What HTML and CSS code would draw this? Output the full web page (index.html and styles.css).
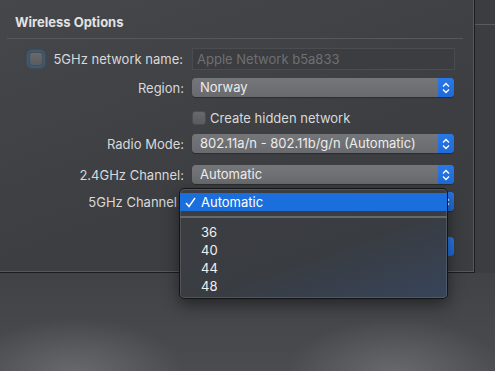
FILE: index.html
```html
<!DOCTYPE html>
<html lang="en">
<head>
    <meta charset="UTF-8">
    <title>Wireless Options</title>
    <link rel="stylesheet" href="styles.css">
</head>
<body>
    <div class="screen">
        <div class="sheet">
            <h2 class="sheet-title">Wireless Options</h2>
            <div class="divider"></div>

            <div class="form">
                <div class="row row-name">
                    <div class="label">
                        <span class="check focused"></span>
                        <span>5GHz network name:</span>
                    </div>
                    <div class="field">Apple Network b5a833</div>
                </div>
                <div class="row row-region">
                    <div class="label">Region:</div>
                    <div class="popup">
                        <span class="popup-text">Norway</span>
                        <span class="popup-arrows">
                            <svg width="8" height="12" viewBox="0 0 8 12"><path d="M1 4.5 L4 1.5 L7 4.5 M1 7.5 L4 10.5 L7 7.5" fill="none" stroke="#fff" stroke-width="1.3"/></svg>
                        </span>
                    </div>
                </div>
                <div class="row row-hidden">
                    <div class="label"></div>
                    <div class="check-line">
                        <span class="check"></span>
                        <span>Create hidden network</span>
                    </div>
                </div>
                <div class="row row-radio">
                    <div class="label">Radio Mode:</div>
                    <div class="popup">
                        <span class="popup-text">802.11a/n - 802.11b/g/n (Automatic)</span>
                        <span class="popup-arrows">
                            <svg width="8" height="12" viewBox="0 0 8 12"><path d="M1 4.5 L4 1.5 L7 4.5 M1 7.5 L4 10.5 L7 7.5" fill="none" stroke="#fff" stroke-width="1.3"/></svg>
                        </span>
                    </div>
                </div>
                <div class="row row-24">
                    <div class="label">2.4GHz Channel:</div>
                    <div class="popup">
                        <span class="popup-text">Automatic</span>
                        <span class="popup-arrows">
                            <svg width="8" height="12" viewBox="0 0 8 12"><path d="M1 4.5 L4 1.5 L7 4.5 M1 7.5 L4 10.5 L7 7.5" fill="none" stroke="#fff" stroke-width="1.3"/></svg>
                        </span>
                    </div>
                </div>
                <div class="row row-5">
                    <div class="label label-covered">5GHz Channel</div>
                    <!-- popup text is hidden under the open menu -->
                    <div class="popup">
                        <span class="popup-text"></span>
                        <span class="popup-arrows">
                            <svg width="8" height="12" viewBox="0 0 8 12"><path d="M1 4.5 L4 1.5 L7 4.5 M1 7.5 L4 10.5 L7 7.5" fill="none" stroke="#fff" stroke-width="1.3"/></svg>
                        </span>
                    </div>
                </div>
                <div class="row row-buttons">
                    <div class="label"></div>
                    <div class="buttons">
                        <span class="btn-default"></span>
                    </div>
                </div>
            </div>

            <!-- open menu of the 5GHz Channel popup -->
            <div class="menu">
                <div class="menu-item selected">
                    <svg class="tick" width="11" height="11" viewBox="0 0 11 11"><path d="M1 6 L4 9.5 L10 1" fill="none" stroke="#fff" stroke-width="1.4"/></svg>
                    Automatic
                </div>
                <div class="menu-sep"></div>
                <div class="menu-item">36</div>
                <div class="menu-item">40</div>
                <div class="menu-item">44</div>
                <div class="menu-item">48</div>
            </div>
        </div>
        <div class="backwin">
            <div class="backwin-bar"></div>
        </div>
    </div>
</body>
</html>
```

FILE: styles.css
```css
/* General */
body {
    margin: 0;
    width: 495px;
    height: 371px;
    overflow: hidden;
    font-family: Inter, "Noto Sans", sans-serif;
    font-size: 13px;
    color: #d9d9da;
    background-color: #46484c;
    background-image:
        radial-gradient(ellipse 110px 60px at 75px 378px, #6a6b6e, rgba(106, 107, 110, 0)),
        radial-gradient(ellipse 110px 60px at 395px 378px, #6a6b6e, rgba(106, 107, 110, 0)),
        linear-gradient(#404246 74%, #4a4c50);
}

.screen {
    display: flex;
    align-items: flex-start;
}

/* Sheet */
.sheet {
    position: relative;
    width: 474px;
    height: 272px;
    flex: none;
    background: linear-gradient(160deg, #45474a, #3c3e41 60%, #3b3d40);
    border-right: 1px solid #1c1d1f;
    border-bottom: 1px solid #1c1d1f;
    box-shadow: inset -1px -1px 0 #56585b;
}

.sheet-title {
    margin: 0;
    padding: 14px 0 0 15px;
    height: 17px;
    font-size: 13px;
    font-weight: 700;
    color: #e2e2e3;
}

.divider {
    height: 1px;
    margin: 7px 11px 0 7px;
    background-color: #56585b;
}

/* Form */
.form {
    display: flex;
    flex-direction: column;
}

.row {
    display: flex;
    align-items: center;
    height: 19px;
}

.row-name { margin-top: 9px; height: 22px; }
.row-region { margin-top: 8px; }
.row-hidden { margin-top: 11px; }
.row-radio { margin-top: 7px; }
.row-24 { margin-top: 12px; }
.row-5 { margin-top: 8px; }
.row-buttons { margin-top: 26px; }

.label {
    width: 192px;
    padding-right: 8px;
    box-sizing: border-box;
    flex: none;
    display: flex;
    justify-content: flex-end;
    align-items: center;
    white-space: nowrap;
}

.row-name .label {
    padding-right: 9px;
}

.label-covered {
    padding-right: 15px;
}

.check {
    width: 14px;
    height: 14px;
    box-sizing: border-box;
    border-radius: 3px;
    background: linear-gradient(#68696c, #5a5b5e);
    border: 1px solid #4c4d50;
}

.check.focused {
    margin-right: 10px;
    box-shadow: 0 0 0 2px #3c5a73, 0 0 2px 3px rgba(60, 90, 115, 0.5);
}

.check-line {
    display: flex;
    align-items: center;
    gap: 4px;
}

.field {
    width: 263px;
    height: 22px;
    box-sizing: border-box;
    padding-left: 4px;
    line-height: 20px;
    background-color: #3b3d40;
    border: 1px solid #4a4c4f;
    color: #6e7073;
}

/* Popup buttons */
.popup {
    display: flex;
    width: 262px;
    height: 19px;
    border-radius: 4px;
    overflow: hidden;
    background: linear-gradient(#757679, #696a6d);
    box-shadow: 0 1px 1px rgba(0, 0, 0, 0.3);
}

.popup-text {
    flex: 1;
    padding-left: 8px;
    line-height: 19px;
    color: #ececec;
    white-space: nowrap;
}

.popup-arrows {
    width: 16px;
    display: flex;
    align-items: center;
    justify-content: center;
    background: linear-gradient(#2a78e6, #1d6ad8);
}

.buttons {
    width: 262px;
    display: flex;
    justify-content: flex-end;
}

.btn-default {
    height: 19px;
    width: 70px;
    border-radius: 4px;
    background: linear-gradient(#2a78e6, #1d6ad8);
}

/* Menu */
.menu {
    position: absolute;
    left: 179px;
    top: 188px;
    width: 269px;
    height: 111px;
    box-sizing: border-box;
    padding-top: 4px;
    border: 1px solid #141517;
    border-radius: 5px;
    background: linear-gradient(160deg, #3c3e42, #393c41 55%, #37445a);
    box-shadow: inset 0 0 0 1px rgba(255, 255, 255, 0.12), 0 6px 16px rgba(0, 0, 0, 0.45);
    z-index: 10;
}

.menu-item {
    height: 18px;
    line-height: 18px;
    padding-left: 21px;
    color: #f0f0f0;
}

.menu-item.selected {
    position: relative;
    background-color: #1a6fdc;
    color: #fff;
}

.tick {
    position: absolute;
    left: 5px;
    top: 4px;
}

.menu-sep {
    height: 2px;
    margin: 5px 0 5px;
    background-color: #66686c;
}

/* Window behind the sheet */
.backwin {
    flex: 1;
    height: 273px;
    background-color: #3b3d40;
}

.backwin-bar {
    height: 24px;
    border-bottom: 1px solid #595b5f;
}
```
